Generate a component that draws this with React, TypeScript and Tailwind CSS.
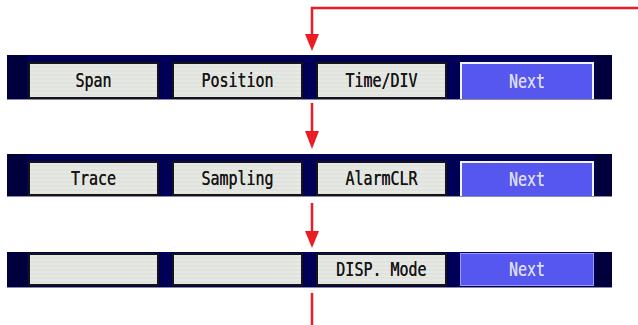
const rows = [
  { labels: ["Span", "Position", "Time/DIV"], selected: true, tall: "h-[45px]", btn: "h-[37px]" },
  { labels: ["Trace", "Sampling", "AlarmCLR"], selected: true, tall: "h-[43px]", btn: "h-[35px]" },
  { labels: ["", "", "DISP. Mode"], selected: false, tall: "h-[36px]", btn: "h-[33px]" },
];

const mono = { fontFamily: '"DejaVu Sans Mono", "Liberation Mono", monospace' };

function SoftKey({ label, height }: { label: string; height: string }) {
  return (
    <div
      className={`flex w-[131px] items-center justify-center border-2 border-[#141414] bg-[repeating-linear-gradient(180deg,#e6e8e4_0px,#e6e8e4_2px,#d9dbd6_3px,#e9ebe7_4px)] ${height}`}
    >
      <span className="inline-block scale-y-[1.35] text-[15px] font-medium text-[#161616] [text-shadow:0_0_0.4px_#161616]" style={mono}>
        {label}
      </span>
    </div>
  );
}

function NextKey({ selected, height }: { selected: boolean; height: string }) {
  return (
    <div
      className={`flex w-[134px] items-center justify-center ${height} ${
        selected ? "border-2 border-b-0 border-[#f4f4ff]" : "border border-[#9c9cff]"
      } bg-[#5557ee]`}
    >
      <span className="inline-block scale-y-[1.35] text-[15px] text-[#dcdcff] [text-shadow:0_0_0.4px_#dcdcff]" style={mono}>
        Next
      </span>
    </div>
  );
}

export default function App() {
  return (
    <main className="relative h-[325px] w-[638px] overflow-hidden bg-white">
      <div className="flex flex-col pt-[55px]">
        {rows.map((row, i) => (
          <div
            key={i}
            className={`ml-[7px] flex w-[605px] items-end border-b border-[#8a8aa8] bg-[repeating-linear-gradient(180deg,#00005a_0px,#00005a_3px,#00004a_4px,#000060_6px)] ${row.tall} ${
              i === 0 ? "" : i === 1 ? "mt-[54px]" : "mt-[55px]"
            }`}
          >
            <div className="h-full w-[20px] bg-[#00003c]" />
            <div className={`ml-[1px] flex items-end gap-[13px] ${i === 2 ? "items-center self-center" : ""}`}>
              {row.labels.map((label, j) => (
                <SoftKey key={j} label={label} height={row.btn} />
              ))}
              <NextKey selected={row.selected} height={row.btn} />
            </div>
            <div className="ml-auto h-full w-[17px] bg-[#00003c]" />
          </div>
        ))}
      </div>

      <svg className="pointer-events-none absolute inset-0" width="638" height="325" viewBox="0 0 638 325">
        <g stroke="#ec1c24" strokeWidth="2.5" fill="none">
          <path d="M638 8 H312 V36" />
          <path d="M312 103 V133" />
          <path d="M312 203 V233" />
          <path d="M312 293 V325" />
        </g>
        <g fill="#ec1c24">
          <polygon points="305,34 319,34 312,51" />
          <polygon points="305,131 319,131 312,149" />
          <polygon points="305,231 319,231 312,248" />
        </g>
      </svg>
    </main>
  );
}
